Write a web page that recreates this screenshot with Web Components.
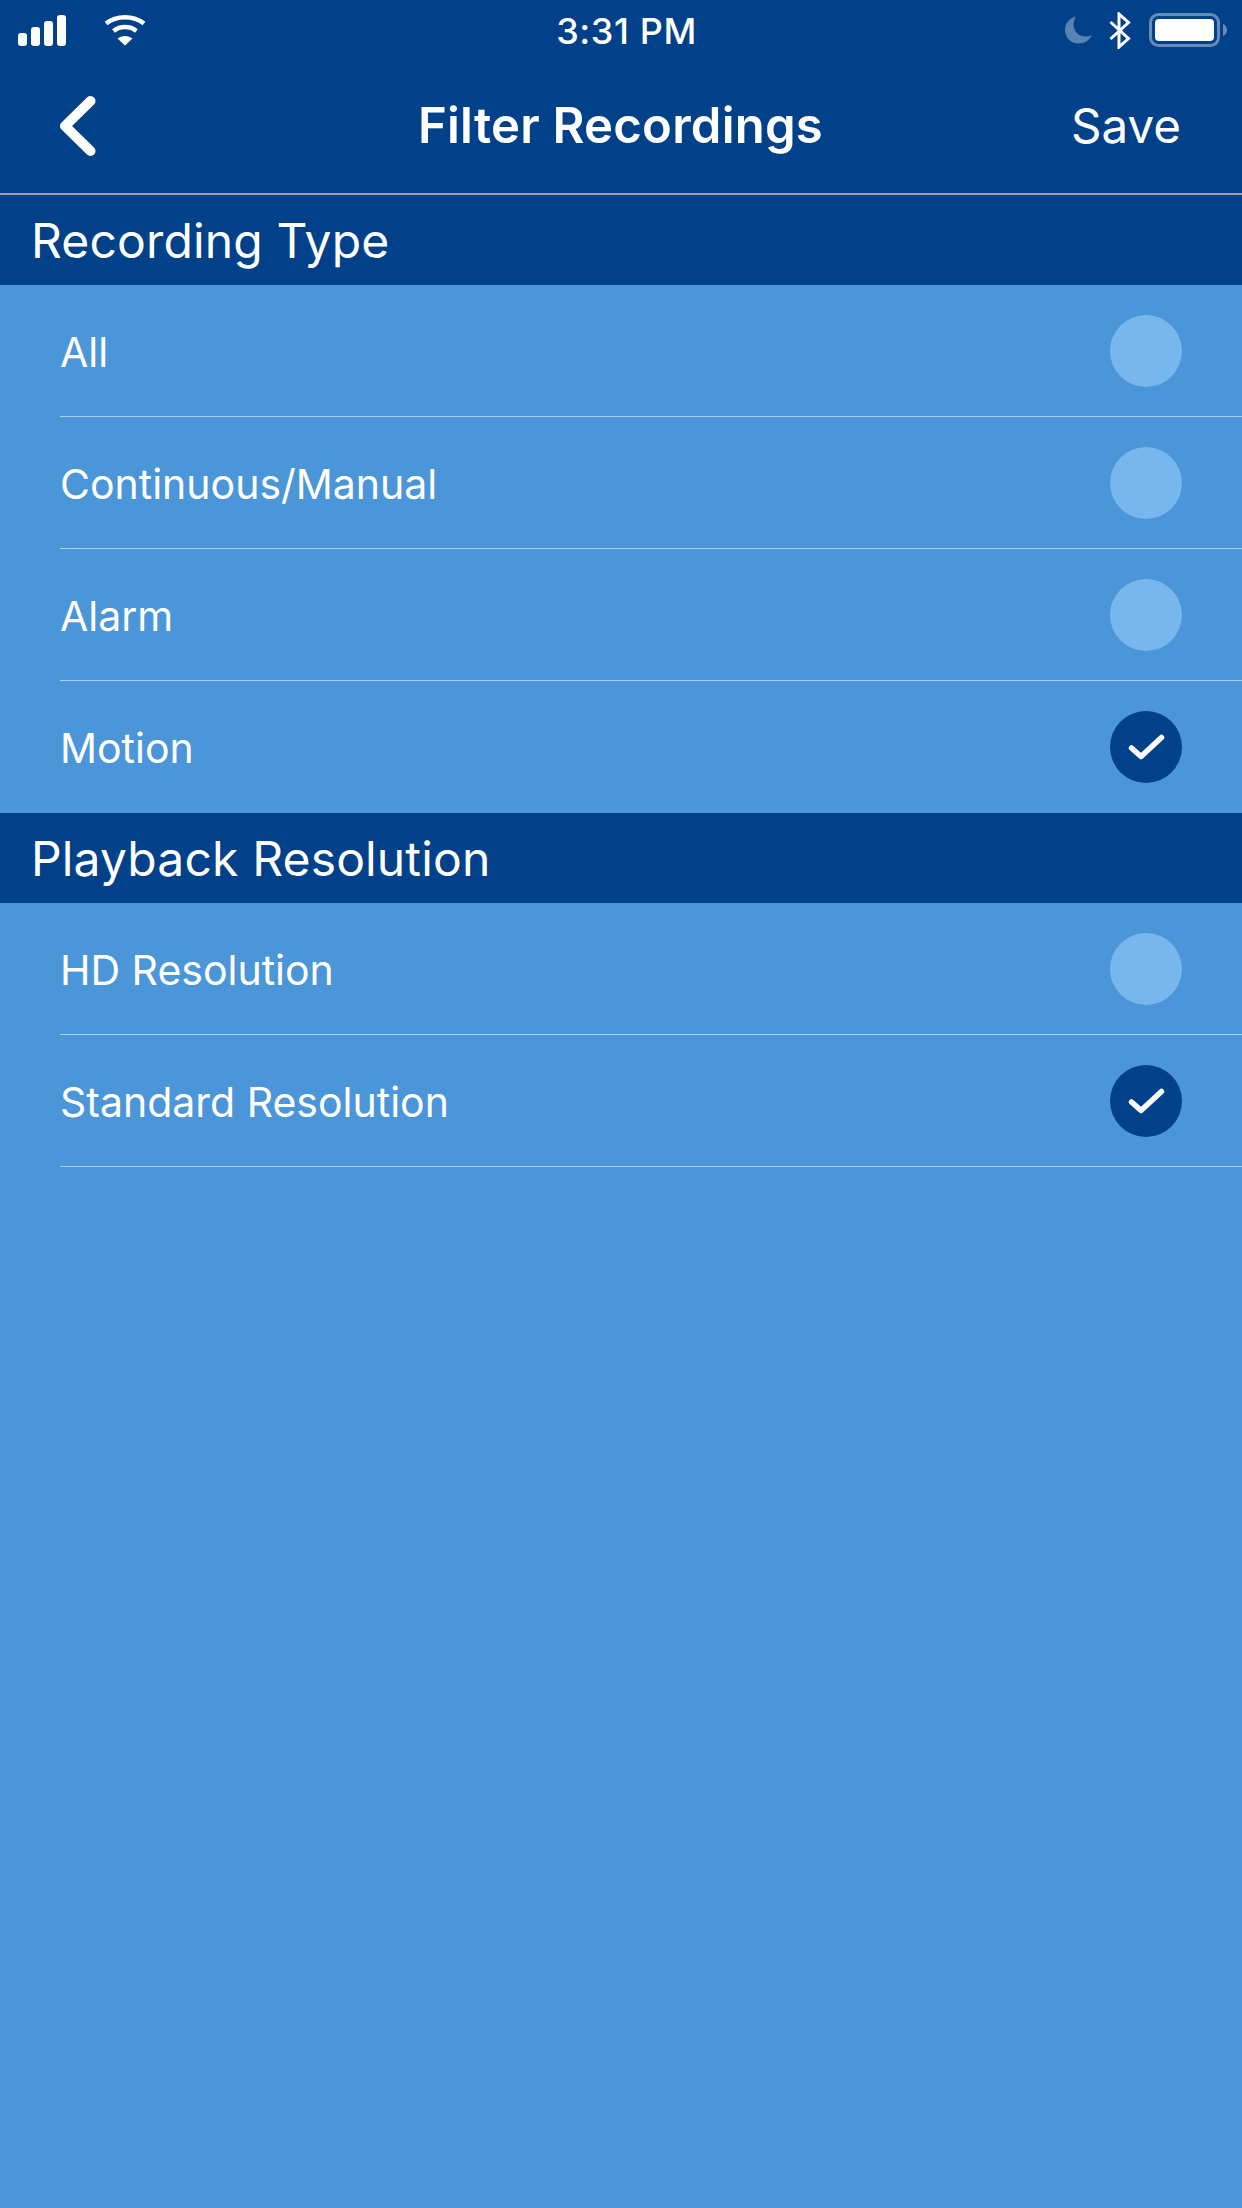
<!DOCTYPE html>
<html>
<head>
<meta charset="utf-8">
<title>Filter Recordings</title>
<style>
  html, body {
    margin: 0;
    padding: 0;
    background-color: #4A96D9;
  }
  body {
    width: 1242px;
    min-height: 2208px;
    font-family: Inter, "Liberation Sans", sans-serif;
    color: #fff;
  }
</style>
</head>
<body>
<status-bar time="3:31 PM"></status-bar>
<nav-bar action="Save">Filter Recordings</nav-bar>

<section-header>Recording Type</section-header>
<filter-row>All</filter-row>
<filter-row>Continuous/Manual</filter-row>
<filter-row>Alarm</filter-row>
<filter-row checked last>Motion</filter-row>

<section-header>Playback Resolution</section-header>
<filter-row>HD Resolution</filter-row>
<filter-row checked>Standard Resolution</filter-row>

<script>
class StatusBar extends HTMLElement {
  constructor() {
    super();
    this.shadowDOM = this.attachShadow({mode: 'open'});
  }

  connectedCallback() {
    this.render();
  }

  render() {
    this.shadowDOM.innerHTML = `
      <style>
        :host {
          display: grid;
          grid-template-columns: 1fr auto 1fr;
          align-items: center;
          height: 60px;
          padding: 0 15px 0 18px;
          box-sizing: border-box;
          background-color: #00418A;
          color: #fff;
        }
        .left, .right {
          display: flex;
          align-items: center;
        }
        .right {
          justify-content: flex-end;
        }
        .time {
          font-size: 36px;
          font-weight: 500;
          letter-spacing: 0.6px;
          padding: 2px 0 0 8px;
        }
        .wifi { margin-left: 38px; }
        .moon { margin-right: 17px; }
        .bt { margin-right: 18px; }
        svg { display: block; }
      </style>
      <div class="left">
        <svg width="48" height="32" viewBox="0 0 48 32" fill="#fff">
          <rect x="0" y="19" width="9" height="13" rx="3"/>
          <rect x="13" y="13" width="9" height="19" rx="3"/>
          <rect x="26" y="7" width="9" height="25" rx="3"/>
          <rect x="39" y="1" width="9" height="31" rx="3"/>
        </svg>
        <svg class="wifi" width="42" height="32" viewBox="0 0 42 32" fill="none" stroke="#fff" stroke-width="4.5">
          <path d="M2 9.500C12.500 1 29.500 1 40 9.500"/>
          <path d="M9.500 17C16 11.800 26 11.800 32.500 17"/>
          <path d="M21 31.500L13.500 24.500C17.500 21 24.500 21 28.500 24.500Z" fill="#fff" stroke="none"/>
        </svg>
      </div>
      <div class="time">${this.getAttribute('time')}</div>
      <div class="right">
        <svg class="moon" width="27" height="28" viewBox="0 0 27 28">
          <path d="M11 0.500C4.500 2 0 7.500 0 14C0 21.700 6 27.500 13.500 27.500C19.500 27.500 24.500 24 27 19C25 20 23 20.500 20.500 20.500C13.500 20.500 8.500 15 8.500 8.500C8.500 5.500 9.500 2.800 11 0.500Z" fill="#fff" fill-opacity="0.35"/>
        </svg>
        <svg class="bt" width="22" height="37" viewBox="0 0 22 37" fill="none" stroke="#fff" stroke-width="3">
          <path d="M1.500 10L19.500 26.500L10 35V2L19.500 10.500L1.500 27"/>
        </svg>
        <svg width="78" height="34" viewBox="0 0 78 34">
          <rect x="1.500" y="1.500" width="68" height="31" rx="8" fill="none" stroke="#fff" stroke-opacity="0.4" stroke-width="3"/>
          <rect x="6" y="6" width="59" height="22" rx="4" fill="#fff"/>
          <path d="M74 11C76.500 12 78 14 78 17C78 20 76.500 22 74 23Z" fill="#fff" fill-opacity="0.4"/>
        </svg>
      </div>
    `;
  }
}

class NavBar extends HTMLElement {
  constructor() {
    super();
    this.shadowDOM = this.attachShadow({mode: 'open'});
  }

  connectedCallback() {
    this.render();
  }

  render() {
    this.shadowDOM.innerHTML = `
      <style>
        :host {
          display: grid;
          grid-template-columns: 1fr auto 1fr;
          align-items: center;
          height: 135px;
          padding: 0 61px 2px 60px;
          box-sizing: border-box;
          background-color: #00418A;
          border-bottom: 2px solid #A0A0A0;
          color: #fff;
        }
        .title {
          font-size: 49px;
          font-weight: 600;
          letter-spacing: 0.25px;
        }
        .action {
          justify-self: end;
          font-size: 47.500px;
        }
        svg { display: block; }
      </style>
      <svg width="36" height="60" viewBox="0 0 36 60" fill="none" stroke="#fff" stroke-width="10" stroke-linecap="round" stroke-linejoin="round">
        <path d="M30.500 5L5 30L30.500 55"/>
      </svg>
      <div class="title"><slot></slot></div>
      <div class="action">${this.getAttribute('action')}</div>
    `;
  }
}

class SectionHeader extends HTMLElement {
  constructor() {
    super();
    this.shadowDOM = this.attachShadow({mode: 'open'});
    this.shadowDOM.innerHTML = `
      <style>
        :host {
          display: flex;
          align-items: center;
          height: 90px;
          padding-left: 31px;
          box-sizing: border-box;
          background-color: #00418A;
          color: #fff;
          font-size: 48px;
          font-weight: 400;
          letter-spacing: 0.15px;
        }
      </style>
      <slot></slot>
    `;
  }
}

class FilterRow extends HTMLElement {
  constructor() {
    super();
    this.shadowDOM = this.attachShadow({mode: 'open'});
  }

  connectedCallback() {
    this.render();
  }

  render() {
    const checked = this.hasAttribute('checked');
    const mark = checked ? `
      <svg width="37" height="26" viewBox="0 0 37 26" fill="none" stroke="#fff" stroke-width="5.500" stroke-linecap="round" stroke-linejoin="round">
        <path d="M3.500 14L13 22.500L33.500 3.500"/>
      </svg>` : '';
    this.shadowDOM.innerHTML = `
      <style>
        :host {
          display: block;
          padding-left: 60px;
          color: #fff;
        }
        .inner {
          display: flex;
          align-items: center;
          justify-content: space-between;
          height: 132px;
          padding-right: 60px;
          box-sizing: border-box;
          border-bottom: 1px solid rgba(255, 255, 255, 0.55);
          font-size: 41px;
          font-weight: 380;
        }
        :host([last]) .inner {
          border-bottom: 0;
        }
        .label {
          padding-top: 2px;
        }
        .radio {
          display: flex;
          align-items: center;
          justify-content: center;
          width: 72px;
          height: 72px;
          border-radius: 50%;
          background-color: ${checked ? '#00418A' : '#78B6EE'};
        }
      </style>
      <div class="inner">
        <span class="label"><slot></slot></span>
        <div class="radio">${mark}</div>
      </div>
    `;
  }
}

customElements.define('status-bar', StatusBar);
customElements.define('nav-bar', NavBar);
customElements.define('section-header', SectionHeader);
customElements.define('filter-row', FilterRow);
</script>
</body>
</html>
